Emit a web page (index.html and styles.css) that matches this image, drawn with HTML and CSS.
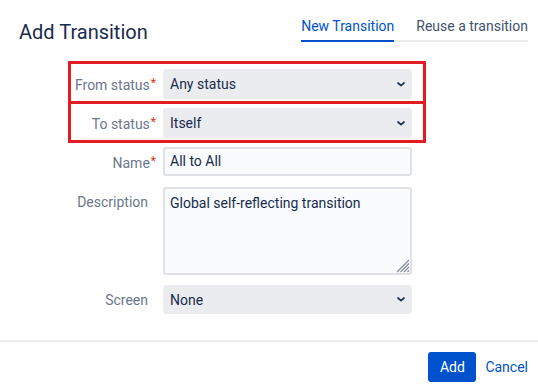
FILE: index.html
```html
<!DOCTYPE html>
<html lang="en">
<head>
    <meta charset="UTF-8">
    <meta name="viewport" content="width=device-width, initial-scale=1.0">
    <title>Add Transition</title>
    <link rel="stylesheet" href="styles.css">
</head>
<body>
    <div class="dialog">
        <div class="dialog-header">
            <h1 class="dialog-title">Add Transition</h1>
            <div class="tabs">
                <div class="tab active">New Transition</div>
                <div class="tab">Reuse a transition</div>
            </div>
        </div>

        <form class="form">
            <div class="row row-marked row-from">
                <label class="label">From status<span class="req">*</span></label>
                <div class="select">
                    <span>Any status</span>
                    <svg class="chevron" viewBox="0 0 8 5" width="8" height="5"><path d="M1 1l3 2.6L7 1" fill="none" stroke="#253858" stroke-width="1.8" stroke-linecap="round" stroke-linejoin="round"/></svg>
                </div>
            </div>
            <div class="row row-marked row-to">
                <label class="label">To status<span class="req">*</span></label>
                <div class="select">
                    <span>Itself</span>
                    <svg class="chevron" viewBox="0 0 8 5" width="8" height="5"><path d="M1 1l3 2.6L7 1" fill="none" stroke="#253858" stroke-width="1.8" stroke-linecap="round" stroke-linejoin="round"/></svg>
                </div>
            </div>
            <div class="row row-name">
                <label class="label">Name<span class="req">*</span></label>
                <div class="input">All to All</div>
            </div>
            <div class="row row-top row-desc">
                <label class="label">Description</label>
                <div class="textarea">
                    Global self-reflecting transition
                    <svg class="grip" viewBox="0 0 16 16" width="16" height="16">
                        <path d="M15 3L3 15M15 6.5L6.5 15M15 10L10 15M15 13.5L13.5 15" stroke="#7a869a" stroke-width="1.1"/>
                    </svg>
                </div>
            </div>
            <div class="row row-screen">
                <label class="label">Screen</label>
                <div class="select select-short">
                    <span>None</span>
                    <svg class="chevron" viewBox="0 0 8 5" width="8" height="5"><path d="M1 1l3 2.6L7 1" fill="none" stroke="#253858" stroke-width="1.8" stroke-linecap="round" stroke-linejoin="round"/></svg>
                </div>
            </div>
        </form>

        <div class="dialog-footer">
            <button type="button" class="btn-primary">Add</button>
            <a class="btn-link">Cancel</a>
        </div>
    </div>
</body>
</html>
```

FILE: styles.css
```css
* {
    margin: 0;
    padding: 0;
    box-sizing: border-box;
}
body {
    background: #fff;
    font-family: Roboto, 'Noto Sans', sans-serif;
    font-size: 14px;
    color: #172b4d;
}
.dialog {
    width: 538px;
    height: 392px;
    overflow: hidden;
}
.dialog-header {
    display: flex;
    justify-content: space-between;
    align-items: flex-start;
    padding: 0 10px 0 19px;
    height: 42px;
}
.dialog-title {
    font-size: 20px;
    font-weight: 400;
    line-height: 24px;
    margin-top: 20px;
    color: #172b4d;
}
.tabs {
    display: flex;
    gap: 22px;
    margin-top: 16px;
    border-bottom: 2px solid #ebecf0;
}
.tab {
    line-height: 20px;
    padding-bottom: 4px;
    color: #42526e;
    margin-bottom: -2px;
    border-bottom: 2px solid transparent;
}
.tab.active {
    color: #0052cc;
    border-bottom-color: #0052cc;
}
.form {
    margin-top: 19px;
    padding-left: 68px;
}
.row {
    display: flex;
    align-items: center;
    width: 358px;
    border: 3px solid transparent;
}
.row-top {
    align-items: flex-start;
}
.row-marked {
    border-color: #e31b23;
}
.row-from {
    padding: 5px 0 2px;
}
.row-to {
    border-top: 0;
    padding: 4px 0 2px;
}
.row-name {
    margin-top: 1px;
}
.row-desc {
    margin-top: 5px;
}
.row-screen {
    margin-top: 4px;
}
.label {
    width: 92px;
    padding-right: 15px;
    text-align: right;
    color: #6b778c;
    line-height: 20px;
    white-space: nowrap;
}
.row-top .label {
    padding-top: 5px;
}
.req {
    color: #de350b;
    font-size: 12px;
    vertical-align: 3px;
    margin-right: -8px;
    margin-left: 1px;
}
.select {
    width: 249px;
    height: 30px;
    display: flex;
    align-items: center;
    justify-content: space-between;
    background: #ebecf0;
    border-radius: 3px;
    padding: 0 7px;
    color: #172b4d;
}
.select-short {
    height: 29px;
}
.chevron {
    display: block;
}
.input {
    width: 249px;
    height: 29px;
    background: #fafbfc;
    border: 2px solid #dfe1e6;
    border-radius: 3px;
    padding: 0 5px;
    line-height: 25px;
}
.textarea {
    position: relative;
    width: 249px;
    height: 88px;
    background: #fafbfc;
    border: 2px solid #dfe1e6;
    border-radius: 3px;
    padding: 4px 5px;
    line-height: 20px;
}
.grip {
    position: absolute;
    right: 0;
    bottom: 0;
}
.dialog-footer {
    display: flex;
    justify-content: flex-end;
    align-items: center;
    margin-top: 23px;
    border-top: 2px solid #ebecf0;
    padding: 10px 10px 0 0;
    gap: 9px;
}
.btn-primary {
    width: 48px;
    height: 30px;
    background: #0052cc;
    color: #fff;
    border: none;
    border-radius: 3px;
    font-family: inherit;
    font-size: 14px;
}
.btn-link {
    color: #0052cc;
    line-height: 30px;
}
```
